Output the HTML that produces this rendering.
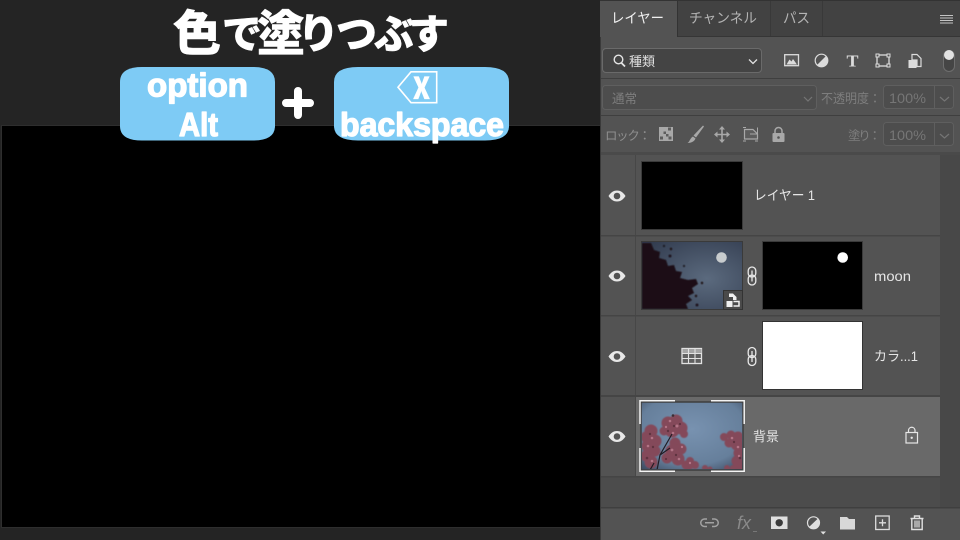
<!DOCTYPE html>
<html lang="ja"><head><meta charset="utf-8"><title>色で塗りつぶす</title>
<style>
html,body{margin:0;padding:0;width:960px;height:540px;overflow:hidden;background:#242424}
svg{display:block}
text{font-family:"Liberation Sans","Noto Sans CJK JP",sans-serif}
.k{font-family:"Noto Sans CJK JP","Liberation Sans",sans-serif;font-weight:900;fill:#fff;stroke:#fff;stroke-linejoin:round}
.l{font-family:"Liberation Sans",sans-serif;font-weight:700;fill:#fff;stroke:#fff;stroke-linejoin:round;stroke-width:1.300px}
</style></head><body>
<svg width="960" height="540" viewBox="0 0 960 540" xmlns="http://www.w3.org/2000/svg">
<defs>
<radialGradient id="sky1" cx="50%" cy="40%" r="75%"><stop offset="0" stop-color="#7892b0"/><stop offset=".7" stop-color="#667f9b"/><stop offset="1" stop-color="#3f4d64"/></radialGradient>
<radialGradient id="sky2" cx="65%" cy="55%" r="75%"><stop offset="0" stop-color="#5b6a7e"/><stop offset="1" stop-color="#333d50"/></radialGradient>
<filter id="soft" x="-5%" y="-5%" width="110%" height="110%"><feGaussianBlur stdDeviation=".6"/></filter>
<clipPath id="c1"><rect x="642" y="242" width="100" height="67"/></clipPath>
<clipPath id="c2"><rect x="642" y="403" width="100" height="66"/></clipPath>
</defs>
<!-- canvas -->
<rect width="600" height="540" fill="#242424"/>
<rect x="1" y="125" width="599" height="403" fill="#2e2e2e"/>
<rect x="2" y="126" width="598" height="401" fill="#000"/>
<!-- title -->
<text class="k" x="173" y="50" font-size="48" stroke-width=".5">色</text>
<text class="k" x="222" y="48" font-size="40" stroke-width=".5">で</text>
<text class="k" x="257" y="50" font-size="48" stroke-width=".5">塗</text>
<text class="k" x="298" y="48" font-size="41" stroke-width=".5">り</text>
<text class="k" x="336" y="48" font-size="41" stroke-width=".5">つ</text>
<text class="k" x="374" y="48" font-size="40" stroke-width=".5">ぶ</text>
<text class="k" x="409" y="48" font-size="40" stroke-width=".5">す</text>
<!-- keys -->
<path d="M120 82Q120 67 142 67H253Q275 67 275 82V126Q275 140.500 253 140.500H142Q120 140.500 120 126Z" fill="#7ecbf5"/>
<path d="M334 82Q334 67 358 67H485Q509 67 509 82V126Q509 140.500 485 140.500H358Q334 140.500 334 126Z" fill="#7ecbf5"/>
<text class="l" x="147" y="96.500" font-size="33.500" textLength="101" lengthAdjust="spacingAndGlyphs">option</text>
<text class="l" x="179" y="136" font-size="33" textLength="39" lengthAdjust="spacingAndGlyphs">Alt</text>
<text class="l" x="340" y="136" font-size="33" textLength="164" lengthAdjust="spacingAndGlyphs">backspace</text>
<path d="M298 91V115M286 103H310" stroke="#fff" stroke-width="8" stroke-linecap="round" fill="none"/>
<path d="M411 71.800H436.700V102.700H411L398 87.200Z" fill="none" stroke="#fff" stroke-width="1.600"/>
<text class="k" x="413" y="99" font-size="30" stroke-width=".3" textLength="17" lengthAdjust="spacingAndGlyphs">X</text>

<!-- panel -->
<rect x="600" y="0" width="360" height="540" fill="#535353"/>
<rect x="600" y="0" width="1" height="540" fill="#3a3a3a"/>
<!-- tabs -->
<rect x="600" y="0" width="360" height="36" fill="#424242"/>
<rect x="600" y="0" width="360" height="1" fill="#333"/>
<rect x="600" y="1" width="77" height="36" fill="#535353"/>
<rect x="677" y="1" width="1" height="36" fill="#333"/>
<rect x="678" y="36" width="282" height="1" fill="#363636"/>
<rect x="770" y="1" width="1" height="35" fill="#393939"/>
<rect x="822" y="1" width="1" height="35" fill="#393939"/>
<text x="611" y="23" font-size="14" fill="#f0f0f0" textLength="53" lengthAdjust="spacingAndGlyphs">レイヤー</text>
<text x="689" y="23" font-size="14" fill="#b4b4b4" textLength="68" lengthAdjust="spacingAndGlyphs">チャンネル</text>
<text x="783" y="23" font-size="14" fill="#b4b4b4" textLength="27" lengthAdjust="spacingAndGlyphs">パス</text>
<path d="M940 15.500H953M940 18H953M940 20.500H953M940 23H953" stroke="#c4c4c4" stroke-width="1.100"/>
<!-- filter row -->
<rect x="602.500" y="48.500" width="159" height="24" rx="3.500" fill="#444" stroke="#6a6a6a"/>
<circle cx="618.500" cy="59.500" r="4.300" fill="none" stroke="#e4e4e4" stroke-width="1.400"/>
<path d="M621.500 63L625 66.500" stroke="#e4e4e4" stroke-width="1.800"/>
<text x="629" y="66" font-size="13" fill="#e0e0e0" textLength="26" lengthAdjust="spacingAndGlyphs">種類</text>
<path d="M749 59.500L753 63.500L757 59.500" fill="none" stroke="#e0e0e0" stroke-width="1.300"/>
<!-- filter icons -->
<rect x="784.700" y="54.700" width="13.800" height="11" fill="#5a5a5a" stroke="#dcdcdc" stroke-width="1.300"/>
<path d="M786.500 64.500L789.500 59.500L791.500 61.500L793 59L797 64.500Z" fill="#dcdcdc"/>
<circle cx="821.500" cy="60.500" r="6.300" fill="none" stroke="#dcdcdc" stroke-width="1.200"/>
<path d="M817 65L826 56A6.300 6.300 0 0 1 817 65Z" fill="#dcdcdc"/>
<text x="846.500" y="66.500" font-size="17" font-weight="700" fill="#dcdcdc" style='font-family:"Liberation Serif",serif' textLength="12" lengthAdjust="spacingAndGlyphs">T</text>
<rect x="877" y="55" width="12" height="11" fill="none" stroke="#dcdcdc" stroke-width="1.300"/>
<path d="M876 54h3v3h-3zM887 54h3v3h-3zM876 64h3v3h-3zM887 64h3v3h-3z" fill="#535353" stroke="#dcdcdc"/>
<path d="M912 54.500H917L921 58.500V66.500H917V60H912Z" fill="none" stroke="#dcdcdc" stroke-width="1.200"/>
<rect x="908.500" y="60" width="8" height="8" fill="#dcdcdc"/>
<rect x="943.500" y="50.500" width="11" height="21" rx="5.500" fill="#454545" stroke="#6e6e6e"/>
<circle cx="949" cy="55" r="5" fill="#e2e2e2"/>
<!-- dividers -->
<rect x="601" y="78" width="359" height="1" fill="#3f3f3f"/>
<rect x="601" y="115" width="359" height="1" fill="#3f3f3f"/>
<!-- blend row -->
<rect x="602.500" y="85.500" width="214" height="24" rx="3" fill="#4d4d4d" stroke="#5f5f5f"/>
<text x="612" y="103" font-size="12.500" fill="#7e7e7e" textLength="25" lengthAdjust="spacingAndGlyphs">通常</text>
<path d="M804 97L808 101L812 97" fill="none" stroke="#757575" stroke-width="1.200"/>
<text x="821" y="103" font-size="13" fill="#7e7e7e" textLength="60" lengthAdjust="spacingAndGlyphs">不透明度：</text>
<rect x="883.500" y="85.500" width="70" height="23" rx="3" fill="#4d4d4d" stroke="#5f5f5f"/>
<path d="M934.500 86V108" stroke="#5f5f5f"/>
<text x="889" y="103" font-size="14" fill="#767676" textLength="37" lengthAdjust="spacingAndGlyphs">100%</text>
<path d="M940 97L944.500 101L949 97" fill="none" stroke="#757575" stroke-width="1.200"/>
<!-- lock row -->
<text x="605" y="140" font-size="12.500" fill="#8e8e8e" textLength="46">ロック：</text>
<rect x="659" y="127" width="14" height="14" fill="#a8a8a8"/>
<path d="M663.500 131.500h2.500v2.500h-2.500zM668 127.500h3v3h-3zM666 134h2.500v2.500H666zM668.500 136.500h3v3h-3zM660 136.500h3v3h-3z" fill="#5d5d5d"/>
<path d="M703 125.500L704 126.500L696 137.500L693.500 135.500Z" fill="#a8a8a8"/>
<path d="M693 136.500L695.500 138.500C694.500 141.500 691 143 687.500 143C690 141.500 690 138 693 136.500Z" fill="#a8a8a8"/>
<path d="M722 128V141M715.500 134.500H728.500" stroke="#a8a8a8" stroke-width="1.600"/>
<path d="M722 126L719 129.500H725ZM722 143L719 139.500H725ZM714 134.500L717.500 131.500V137.500ZM730 134.500L726.500 131.500V137.500Z" fill="#a8a8a8"/>
<path d="M744.500 129.500H753L757.500 134V139H744.500Z" fill="#5d5d5d" stroke="#a8a8a8" stroke-width="1.200"/>
<path d="M750 134H757.500V127.500M743 127.500H746M743 141H746M755 141H758" fill="none" stroke="#a8a8a8" stroke-width="1"/>
<rect x="772.500" y="133" width="12" height="9" rx="1" fill="#a8a8a8"/>
<path d="M775 133.500V131A3.500 3.500 0 0 1 782 131V133.500" fill="none" stroke="#a8a8a8" stroke-width="1.500"/>
<circle cx="778.500" cy="137.500" r="1.300" fill="#535353"/>
<text x="848" y="140" font-size="12.500" fill="#7e7e7e" textLength="33">塗り：</text>
<rect x="883.500" y="122.500" width="70" height="23" rx="3" fill="#4d4d4d" stroke="#5f5f5f"/>
<path d="M934.500 123V145" stroke="#5f5f5f"/>
<text x="889" y="140" font-size="14" fill="#767676" textLength="37" lengthAdjust="spacingAndGlyphs">100%</text>
<path d="M940 134L944.500 138L949 134" fill="none" stroke="#757575" stroke-width="1.200"/>
<rect x="601" y="152" width="359" height="3" fill="#4a4a4a"/>

<!-- layers area -->
<rect x="601" y="155" width="359" height="353" fill="#4c4c4c"/>
<rect x="940" y="155" width="20" height="353" fill="#484848"/>
<rect x="601" y="155" width="339" height="80" fill="#535353"/>
<rect x="601" y="236" width="339" height="79" fill="#535353"/>
<rect x="601" y="316" width="339" height="79" fill="#535353"/>
<rect x="636" y="397" width="304" height="79" fill="#696969"/>
<rect x="601" y="396" width="34" height="80" fill="#535353"/>
<path d="M635.500 155V476" stroke="#474747"/>
<rect x="601" y="235" width="339" height="1.500" fill="#454545"/>
<rect x="601" y="315" width="339" height="1.500" fill="#454545"/>
<rect x="601" y="395" width="339" height="2" fill="#454545"/>
<rect x="601" y="476" width="339" height="1.500" fill="#454545"/>

<!-- eyes -->
<g fill="#e8e8e8">
<path d="M608.500 196C611 192 614 190.500 617 190.500C620 190.500 623 192 625.500 196C623 200 620 201.500 617 201.500C614 201.500 611 200 608.500 196Z"/>
<path d="M608.500 276C611 272 614 270.500 617 270.500C620 270.500 623 272 625.500 276C623 280 620 281.500 617 281.500C614 281.500 611 280 608.500 276Z"/>
<path d="M608.500 356.500C611 352.500 614 351 617 351C620 351 623 352.500 625.500 356.500C623 360.500 620 362 617 362C614 362 611 360.500 608.500 356.500Z"/>
<path d="M608.500 436.500C611 432.500 614 431 617 431C620 431 623 432.500 625.500 436.500C623 440.500 620 442 617 442C614 442 611 440.500 608.500 436.500Z"/>
</g>
<g fill="#535353"><circle cx="617" cy="196" r="3.300"/><circle cx="617" cy="276" r="3.300"/><circle cx="617" cy="356.500" r="3.300"/><circle cx="617" cy="436.500" r="3.300"/></g>

<!-- layer 1 -->
<rect x="641.500" y="161.500" width="101" height="68" fill="#000" stroke="#3a3a3a"/>
<text x="754" y="200" font-size="13.500" fill="#e6e6e6" textLength="61" lengthAdjust="spacingAndGlyphs">レイヤー 1</text>

<!-- moon -->
<rect x="641.500" y="241.500" width="101" height="68" fill="url(#sky2)" stroke="#3a3a3a"/>
<g clip-path="url(#c1)"><g fill="#1c0c12" filter="url(#soft)">
<path d="M642 243H651L654 250L660 252L659 258L666 260L668 266L674 265L676 271L682 272L680 278L688 280L696 279L698 284L692 288L694 293L688 296L692 300L686 304L688 309H642Z"/>
<circle cx="670" cy="256" r="1.400"/><circle cx="671" cy="249" r="1.200"/><circle cx="664" cy="246" r="1"/><circle cx="696" cy="296" r="1.200"/><circle cx="702" cy="283" r="1.200"/><circle cx="684" cy="266" r="1"/><circle cx="697" cy="305" r="1.400"/>
</g></g>
<circle cx="721.500" cy="257.500" r="5.300" fill="#c8ccce"/>
<rect x="723.500" y="290.500" width="19" height="19" fill="#4a4a4a" stroke="#333"/>
<path d="M729 293.500H733L736.500 297V300H733V297H729Z" fill="#f0f0f0"/>
<rect x="726.500" y="301" width="6" height="6" fill="#f0f0f0"/>
<path d="M733.500 301.500H739V306H733.500" fill="none" stroke="#f0f0f0" stroke-width="1.500"/>
<rect x="762.500" y="241.500" width="100" height="68" fill="#000" stroke="#3a3a3a"/>
<circle cx="842.700" cy="257.500" r="5.300" fill="#fff"/>
<g fill="none" stroke="#e8e8e8" stroke-width="1.300"><rect x="748.200" y="267" width="7.600" height="10" rx="3.800"/><rect x="748.200" y="275" width="7.600" height="10" rx="3.800"/></g>
<path d="M752 270.500V281.500" stroke="#e8e8e8" stroke-width="1.300"/>
<text x="874" y="281" font-size="14" fill="#e6e6e6" textLength="37" lengthAdjust="spacingAndGlyphs">moon</text>

<!-- color lookup -->
<rect x="682" y="348.500" width="19.500" height="15" fill="#606060" stroke="#e2e2e2" stroke-width="1.300"/>
<rect x="682.500" y="349" width="19" height="4.500" fill="#a5a5a5"/>
<path d="M682 353.500H701.500M682 358.500H701.500M688.500 348.500V363.500M695 348.500V363.500" stroke="#e2e2e2" stroke-width="1.100"/>
<g fill="none" stroke="#e8e8e8" stroke-width="1.300"><rect x="748.200" y="347.500" width="7.600" height="10" rx="3.800"/><rect x="748.200" y="355.500" width="7.600" height="10" rx="3.800"/></g>
<path d="M752 351V362" stroke="#e8e8e8" stroke-width="1.300"/>
<rect x="762.500" y="321.500" width="100" height="68" fill="#fff" stroke="#333"/>
<text x="874" y="361" font-size="13.500" fill="#e6e6e6" textLength="44" lengthAdjust="spacingAndGlyphs">カラ...1</text>

<!-- background -->
<rect x="641" y="402" width="102" height="68" fill="url(#sky1)" stroke="#3e3e3e" stroke-width="1.500"/>
<g clip-path="url(#c2)">
<g fill="#84495a" stroke="#84495a" stroke-width="3" filter="url(#soft)">
<circle cx="668" cy="423" r="5"/><circle cx="676" cy="421" r="5"/><circle cx="681" cy="428" r="5"/><circle cx="672" cy="430" r="6"/><circle cx="664" cy="431" r="3"/><circle cx="684" cy="434" r="2.500"/>
<circle cx="651" cy="431" r="5"/><circle cx="646" cy="437" r="4"/><circle cx="655" cy="441" r="5"/><circle cx="648" cy="446" r="5"/><circle cx="655" cy="451" r="4"/><circle cx="646" cy="456" r="4"/><circle cx="651" cy="462" r="5"/>
<circle cx="675" cy="443" r="4"/><circle cx="681" cy="449" r="4"/><circle cx="672" cy="451" r="5"/><circle cx="667" cy="458" r="4"/><circle cx="678" cy="459" r="5"/><circle cx="686" cy="465" r="3"/>
<circle cx="690" cy="461" r="2.500"/><circle cx="688" cy="467" r="3"/><circle cx="695" cy="465" r="2.500"/><circle cx="705" cy="468" r="1.500"/><circle cx="710" cy="469" r="1"/>
<circle cx="724" cy="437" r="2.500"/><circle cx="731" cy="435" r="3"/><circle cx="738" cy="437" r="4"/><circle cx="729" cy="443" r="3"/><circle cx="737" cy="444" r="5"/><circle cx="739" cy="453" r="4"/><circle cx="737" cy="461" r="4"/><circle cx="740" cy="467" r="3.500"/><circle cx="727" cy="468" r="1.500"/><circle cx="733" cy="468" r="1.500"/>
</g>
<g fill="#b27486"><circle cx="670" cy="421" r="1.300"/><circle cx="677" cy="426" r="1.500"/><circle cx="673" cy="433" r="1.300"/><circle cx="666" cy="427" r="1.200"/><circle cx="652" cy="438" r="1.300"/><circle cx="648" cy="446" r="1.300"/><circle cx="672" cy="450" r="1.400"/><circle cx="679" cy="459" r="1.300"/><circle cx="682" cy="447" r="1.200"/><circle cx="732" cy="438" r="1.300"/><circle cx="690" cy="463" r="1.200"/><circle cx="738" cy="447" r="1.300"/><circle cx="652" cy="461" r="1.300"/><circle cx="739" cy="456" r="1.200"/></g>
<g fill="#5f3340"><circle cx="674" cy="426" r="1.200"/><circle cx="668" cy="431" r="1.200"/><circle cx="680" cy="424" r="1.100"/><circle cx="650" cy="434" r="1.200"/><circle cx="653" cy="447" r="1.200"/><circle cx="647" cy="458" r="1.300"/><circle cx="676" cy="455" r="1.200"/><circle cx="666" cy="459" r="1.100"/><circle cx="734" cy="442" r="1.200"/><circle cx="740" cy="458" r="1.300"/></g>
<path d="M657 470L660 455L668 441L672 434M660 455L670 448M650 470L654 463" fill="none" stroke="#211c25" stroke-width="1.200"/>
<circle cx="673" cy="415.500" r="1.300" fill="#3b2d33"/>
</g>
<path d="M675 400.800H640V424M640 448V471.200H675M711 471.200H744.200V448M744.200 424V400.800H711" fill="none" stroke="#f4f4f4" stroke-width="1.500"/>
<text x="753" y="441" font-size="13" fill="#e6e6e6" textLength="26" lengthAdjust="spacingAndGlyphs">背景</text>
<rect x="906" y="432.500" width="11.500" height="10.500" fill="none" stroke="#e6e6e6" stroke-width="1.200"/>
<path d="M908.500 432.500V430A3.300 3.300 0 0 1 915 430V432.500" fill="none" stroke="#e6e6e6" stroke-width="1.200"/>
<circle cx="911.700" cy="437.800" r="1.200" fill="#e6e6e6"/>

<!-- footer -->
<rect x="601" y="507" width="359" height="1.500" fill="#3f3f3f"/>
<rect x="601" y="508.500" width="359" height="31.500" fill="#535353"/>
<g fill="none" stroke="#a2a2a2" stroke-width="1.500"><path d="M707 519H704.500A3.700 3.700 0 0 0 704.500 526.500H707M712 519H714.500A3.700 3.700 0 0 1 714.500 526.500H712M705 522.800H714"/></g>
<text x="737" y="529" font-size="18" font-style="italic" fill="#8a8a8a" textLength="14" lengthAdjust="spacingAndGlyphs">fx</text>
<path d="M753 531.500H757" stroke="#777" stroke-width="1"/>
<rect x="771" y="516.500" width="16.500" height="12.500" fill="#e0e0e0"/>
<circle cx="779.200" cy="522.800" r="3.700" fill="#3c3c3c"/>
<circle cx="813.500" cy="522.800" r="6" fill="none" stroke="#e0e0e0" stroke-width="1.200"/>
<path d="M809 527L818 518.500A6 6 0 0 1 809 527Z" fill="#e0e0e0"/>
<path d="M820.500 531.500H826L823.200 534.500Z" fill="#e0e0e0"/>
<path d="M840 517H847L849 519H855V529.500H840Z" fill="#d8d8d8"/>
<rect x="875.700" y="516" width="13.500" height="13.500" fill="#555" stroke="#dcdcdc" stroke-width="1.300"/>
<path d="M879 522.800H886M882.500 519.300V526.300" stroke="#dcdcdc" stroke-width="1.300"/>
<path d="M910.500 518.500H923.500M914.500 518V516H919.500V518" fill="none" stroke="#e0e0e0" stroke-width="1.400"/>
<path d="M911.800 519V529.500H922.200V519" fill="none" stroke="#e0e0e0" stroke-width="1.400"/>
<path d="M915 520.500V527.500M917 520.500V527.500M919 520.500V527.500" stroke="#e0e0e0" stroke-width="1.200"/>
</svg>
</body></html>
